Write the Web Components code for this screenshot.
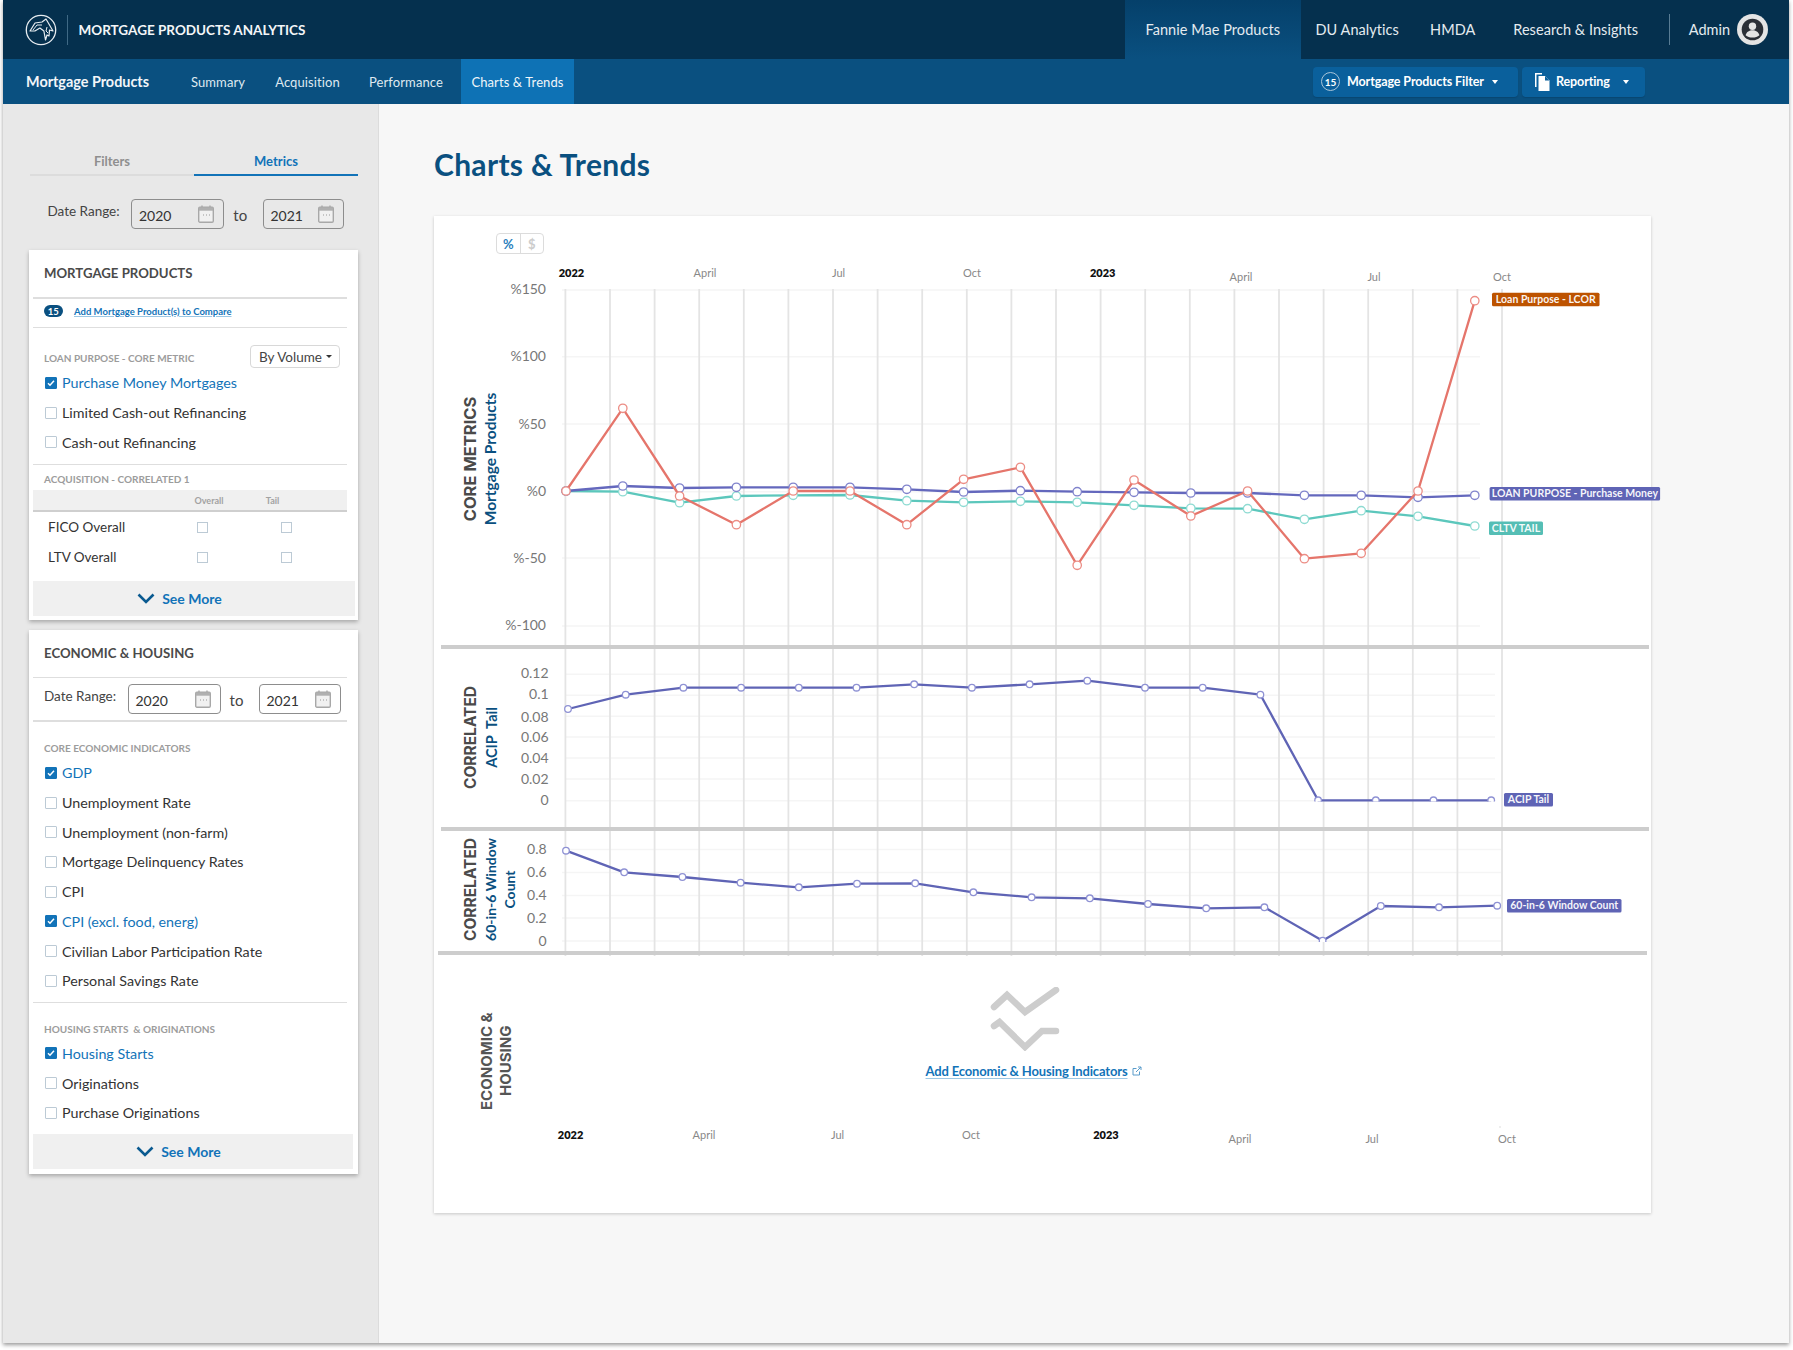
<!DOCTYPE html>
<html lang="en">
<head>
<meta charset="utf-8">
<title>Mortgage Products Analytics</title>
<style>
html,body{margin:0;padding:0;background:#fff;height:1350px;overflow:hidden}
body{font-family:"Lato","Noto Sans",sans-serif;color:#333;font-size:15px}
</style>
</head>
<body>
<app-shell></app-shell>
<script>
function def(name, css, html, init){
  customElements.define(name, class extends HTMLElement{
    constructor(){
      super();
      const r=this.attachShadow({mode:'open'});
      const h=typeof html==='function'?html(this):html;
      r.innerHTML='<style>'+css+'</style>'+h;
    }
    connectedCallback(){
      if(init&&!this._i){this._i=1;init(this,this.shadowRoot);}
    }
  });
}
const CAL='<svg width="16" height="18" viewBox="0 0 16 18"><path d="M4 0.5v3M12 0.5v3" stroke="#a8a8a8" stroke-width="1.4"/><rect x="0.7" y="2.2" width="14.6" height="15" rx="1.2" fill="#f1f1f1" stroke="#a8a8a8" stroke-width="1.4"/><rect x="1" y="2.5" width="14" height="3.2" fill="#b0b0b0"/><path d="M5 10h1M8 10h1M11 10h1" stroke="#999" stroke-width="1"/></svg>';

def('top-bar',`
:host{display:flex;height:59px;background:#05304e;color:#fff;align-items:stretch}
.logo{width:63.5px;box-sizing:border-box;padding-left:22px;display:flex;align-items:center}
.sep{width:1px;height:30px;background:#3f6985;align-self:center}
.name{margin-left:11px;font-weight:700;font-size:13.5px;align-self:center;color:#f4f6f8;white-space:nowrap}
nav{margin-left:auto;display:flex;align-items:stretch;font-size:14.5px;color:#e4ebf0}
nav span{display:flex;align-items:center;justify-content:center;letter-spacing:.05px}
.on{background:linear-gradient(#05406a,#0a5080)}
.div{width:1px;height:31px;background:#587c94;align-self:center;margin-left:9px}
.admin{font-size:14.5px;color:#e4ebf0;align-self:center;margin-left:19px}
.ava{align-self:center;margin-left:7px;margin-right:21px;display:block}
`,`
<div class="logo"><svg width="32" height="32" viewBox="0 0 32 32" fill="none" stroke="#e8edf1"><circle cx="16" cy="16" r="14.7" stroke-width="1.3"/><path d="M5 17l5-8 7-1 4-3 7 12-3.5-1-.5 6-2-1-1.5 5-1.6-9-4-3-5 3z" stroke-width="1.2" stroke-linejoin="round"/><path d="M8 16l4-5 5 0M22 13l-1 4 2 2" stroke-width="1"/></svg></div>
<div class="sep"></div>
<div class="name">MORTGAGE PRODUCTS ANALYTICS</div>
<nav>
<span class="on" style="width:176px">Fannie Mae Products</span>
<span style="width:113px">DU Analytics</span>
<span style="width:78px">HMDA</span>
<span style="width:168px">Research &amp; Insights</span>
</nav>
<div class="div"></div>
<div class="admin">Admin</div>
<svg class="ava" width="31" height="31" viewBox="0 0 31 31"><circle cx="15.5" cy="15.5" r="15.5" fill="#e4e4e4"/><circle cx="15.5" cy="15.5" r="10.8" fill="#2b2f36"/><circle cx="15.5" cy="12.3" r="3.7" fill="#e4e4e4"/><path d="M8.6 21.2c1-3.6 3.8-5 6.9-5s5.9 1.4 6.9 5c-1.8 1.5-4.200 2.400-6.900 2.400s-5.100-.9-6.900-2.400z" fill="#e4e4e4"/></svg>
`);

def('sub-bar',`
:host{display:flex;height:45px;background:#0a5080;color:#dfe9f0;font-size:13px;align-items:stretch}
b{width:173px;padding-left:23px;box-sizing:border-box;display:flex;align-items:center;color:#f2f6f9;font-size:14.4px;font-weight:700;white-space:nowrap}
span{display:flex;align-items:center;justify-content:center;letter-spacing:.1px}
.on{background:#0e72b5;color:#f0f6fa;margin-left:4px}
.r{margin-left:auto;display:flex;align-items:center;gap:4px;padding-right:144px}
.btn{height:30px;background:#0a609c;border-radius:4px;display:flex;align-items:center;color:#fff;font-size:12.5px;font-weight:700;box-shadow:0 1px 1px rgba(0,0,0,.12);box-sizing:border-box;justify-content:flex-start;letter-spacing:-.1px;white-space:nowrap}
.n{width:19px;height:19px;border:1.4px solid #a9c5d9;border-radius:50%;box-sizing:border-box;font-size:10px;display:flex;align-items:center;justify-content:center;margin:0 7px 0 8px}
.car{width:0;height:0;border:3.500px solid transparent;border-top:4px solid #fff;border-bottom:0;margin-left:auto}
`,`
<b>Mortgage Products</b>
<span style="width:84px">Summary</span>
<span style="width:95px">Acquisition</span>
<span style="width:102px">Performance</span>
<span class="on" style="width:113px">Charts &amp; Trends</span>
<div class="r">
<div class="btn" style="width:205px;padding-right:20px"><i class="n" style="font-style:normal">15</i>Mortgage Products Filter<i class="car"></i></div>
<div class="btn" style="width:123px;padding-right:16px;padding-left:12px"><svg width="17" height="18" viewBox="0 0 17 18" style="margin-right:5px" fill="#fff"><path d="M1 0h7v1.500H2.500V14H1z"/><path d="M4.500 3H11l4.500 4.500V18H4.500z"/><path d="M11 3v4.500h4.500" fill="#0a609c"/></svg>Reporting<i class="car"></i></div>
</div>
`);

def('side-tabs',`
:host{display:flex;margin:44px 20px 0 1px;height:28px;font-size:13px;font-weight:700;color:#8f8f8f;text-align:center}
div{flex:1;border-bottom:2px solid #dcdcdc;line-height:27px}
.a{color:#1273b8;border-color:#1273b8}
`,`<div>Filters</div><div class="a">Metrics</div>`);

def('date-box',`
:host{display:inline-flex;align-items:center;height:30px;box-sizing:border-box;border:1px solid #8d8d8d;border-radius:4px;padding:0 9px 0 7px;font-size:14px;color:#333;justify-content:space-between;background:transparent}
span{position:relative;top:1px}
svg{display:block}
`,(e)=>`<span>${e.getAttribute('v')}</span>${CAL}`);

def('date-row',`
:host{display:flex;align-items:center;font-size:13.5px;color:#444}
.l{white-space:nowrap;position:relative;top:-3px}
.t{font-size:15px;text-align:center;position:relative;top:1px;padding-right:6px;box-sizing:border-box}
`,(e)=>{
  const c=(e.getAttribute('c')||'').split(',').map(Number);
  return `<div class="l" style="width:${c[0]}px">Date Range:</div><date-box v="2020" style="width:${c[1]}px"></date-box><div class="t" style="width:${c[2]}px">to</div><date-box v="2021" style="width:${c[3]}px"></date-box>`;
});

def('metric-card',`
:host{display:block;background:#fff;box-shadow:0 2px 4px rgba(0,0,0,.28);width:329px;box-sizing:border-box}
`,`<slot></slot>`);

def('card-title',`
:host{display:block;font-weight:700;font-size:13.2px;color:#4a4a4a;padding-left:15px;white-space:nowrap}
`,`<slot></slot>`);

def('rule-line',`
:host{display:block;margin:0 11px 0 4px;background:#dedede;height:1px}
`,``);

def('sec-label',`
:host{display:block;font-weight:700;font-size:10px;color:#9c9c9c;padding-left:15px;white-space:nowrap}
`,`<slot></slot>`);

def('check-row',`
:host{display:flex;align-items:center;height:29.7px;padding-left:16px;font-size:14.3px;color:#333;white-space:nowrap}
:host([checked]){color:#1273b8}
.b{width:12px;height:12px;box-sizing:border-box;border:1px solid #bccad5;border-radius:1px;margin-right:5px;display:block;flex:none;background:#fff}
:host([checked]) .b{background:#1273b8;border-color:#1273b8}
svg{display:block}
`,(e)=>e.hasAttribute('checked')
 ?`<span class="b"><svg width="10" height="10" viewBox="0 0 10 10"><path d="M2 5.200l2 2 4-4.400" fill="none" stroke="#fff" stroke-width="1.500"/></svg></span><slot></slot>`
 :`<span class="b"></span><slot></slot>`);

def('see-more',`
:host{display:flex;align-items:center;justify-content:center;height:35px;background:#f0f0f0;font-weight:700;font-size:14px;color:#1273b8;gap:7px;padding-right:29px;box-sizing:border-box}
svg{display:block}
`,`<svg width="18" height="11" viewBox="0 0 18 11"><path d="M1.500 1.500L9 9l7.500-7.500" fill="none" stroke="#0a5a90" stroke-width="2.600"/></svg><span>See More</span>`);

def('product-card',`
:host{display:flex;flex-direction:column;padding-bottom:4px}
.t{height:47px;box-sizing:border-box;padding-bottom:2px;display:flex;align-items:center}
.cmp{height:28px;display:flex;align-items:center;padding:0 0 4px 14.5px;box-sizing:border-box;font-size:9.500px;font-weight:700;color:#1273b8}
.cmp i{font-style:normal;width:19.500px;height:12px;border-radius:6px;background:#0a5080;color:#fff;font-size:9.500px;display:flex;align-items:center;justify-content:center;margin-right:11px}
.cmp u{text-decoration-color:#9cc7e4}
.h{height:40px;display:flex;align-items:flex-end;justify-content:space-between;padding-right:18px}
.h sec-label{padding-bottom:4px}
.dd{width:90px;height:23px;box-sizing:border-box;border:1px solid #d8d8d8;border-radius:4px;font-size:13.500px;display:flex;align-items:center;padding-left:8px;color:#444}
.dd i{margin-left:auto;margin-right:7px;width:0;height:0;border:3px solid transparent;border-top:3.500px solid #333;border-bottom:0}
.acq{height:25px;display:flex;align-items:center;padding-top:2px;box-sizing:border-box}
.th{margin:0 11px 0 4px;height:22px;box-sizing:border-box;background:#f0f0f0;border-bottom:2px solid #cfcfcf;display:grid;grid-template-columns:151px 50px 77px 36px;font-size:9px;font-weight:700;color:#a2a2a2;align-items:center;text-align:center}
.tr{margin-left:19px;display:grid;grid-template-columns:149px 84px 30px;height:30px;align-items:center;font-size:13.500px;color:#333}
.c{width:11px;height:11px;box-sizing:border-box;border:1px solid #bccad5;display:block;background:#fff}
see-more{margin:9px 3px 0 4px}
`,`
<div class="t"><card-title>MORTGAGE PRODUCTS</card-title></div>
<rule-line style="height:2px"></rule-line>
<div class="cmp"><i>15</i><u>Add Mortgage Product(s) to Compare</u></div>
<rule-line></rule-line>
<div class="h"><sec-label>LOAN PURPOSE - CORE METRIC</sec-label><div class="dd">By Volume<i></i></div></div>
<check-row checked>Purchase Money Mortgages</check-row>
<check-row>Limited Cash-out Refinancing</check-row>
<check-row>Cash-out Refinancing</check-row>
<rule-line style="margin-top:7px"></rule-line>
<div class="acq"><sec-label>ACQUISITION - CORRELATED 1</sec-label></div>
<div class="th"><span></span><span>Overall</span><span>Tail</span><span></span></div>
<div class="tr"><span>FICO Overall</span><i class="c"></i><i class="c"></i></div>
<div class="tr"><span>LTV Overall</span><i class="c"></i><i class="c"></i></div>
<see-more></see-more>
`);

def('econ-card',`
:host{display:flex;flex-direction:column;padding-bottom:5px}
.t{height:47px;box-sizing:border-box;padding-bottom:2px;display:flex;align-items:center}
.d{height:42px;display:flex;align-items:center;padding:0 0 0 15px;box-sizing:border-box}
.s1{height:36px;display:flex;align-items:flex-end}
.s1 sec-label{padding-bottom:4px}
see-more{margin:6px 5px 0 4px}
`,`
<div class="t"><card-title>ECONOMIC &amp; HOUSING</card-title></div>
<rule-line></rule-line>
<div class="d"><date-row c="83.500,93,38,82"></date-row></div>
<rule-line style="height:2px"></rule-line>
<div class="s1"><sec-label>CORE ECONOMIC INDICATORS</sec-label></div>
<check-row checked>GDP</check-row>
<check-row>Unemployment Rate</check-row>
<check-row>Unemployment (non-farm)</check-row>
<check-row>Mortgage Delinquency Rates</check-row>
<check-row>CPI</check-row>
<check-row checked>CPI (excl. food, energ)</check-row>
<check-row>Civilian Labor Participation Rate</check-row>
<check-row>Personal Savings Rate</check-row>
<rule-line style="margin-top:6px"></rule-line>
<div class="s1"><sec-label style="padding-bottom:4px">HOUSING STARTS &nbsp;&amp; ORIGINATIONS</sec-label></div>
<check-row checked>Housing Starts</check-row>
<check-row>Originations</check-row>
<check-row>Purchase Originations</check-row>
<see-more></see-more>
`);

def('side-panel',`
:host{display:block;width:376px;background:#e8e8e8;border-right:1px solid #dcdcdc;box-sizing:border-box;padding-left:26px;flex:none}
date-row{margin:23px 0 21px 18.500px}
metric-card+metric-card{margin-top:10px}
`,`
<side-tabs></side-tabs>
<date-row c="83.500,93,38.500,81.500"></date-row>
<metric-card><product-card></product-card></metric-card>
<metric-card><econ-card></econ-card></metric-card>
`);

/* chart panels: drawn in page coordinates through the viewBox */
const X0=434;
const F='"Lato","Noto Sans",sans-serif';
const TITLE='"Inter","Lato",sans-serif';
function vGrid(y1,y2){let s='';for(let i=0;i<22;i++){const x=565.4+i*44.6;s+=`<line x1="${x}" x2="${x}" y1="${y1}" y2="${y2}" stroke="#e4e4e4" stroke-width="1.800"/>`;}return s;}
function hGrid(ys,x1,x2){return ys.map(y=>`<line x1="${x1}" x2="${x2}" y1="${y}" y2="${y}" stroke="#f5f5f5" stroke-width="1.500"/>`).join('');}
function yLabels(l,x){return l.map(([t,y])=>`<text x="${x}" y="${y+5}" text-anchor="end" font-size="14" fill="#777">${t}</text>`).join('');}
function series(xs,ys,col,ring,r,clip){
  const p=ys.map((y,i)=>xs[i]+','+y).join(' ');
  return `<polyline points="${p}" fill="none" stroke="${col}" stroke-width="2.300" stroke-linejoin="round"/>`+
   `<g ${clip?`clip-path="url(#${clip})"`:''}>`+ys.map((y,i)=>`<circle cx="${xs[i]}" cy="${y}" r="${r}" fill="#fff" stroke="${ring}" stroke-width="1.300"/>`).join('')+`</g>`;
}
function tag(t,x,y,w,col,size){return `<rect x="${x}" y="${y}" width="${w}" height="13.500" rx="1.500" fill="${col}"/><text x="${x+w/2}" y="${y+10.300}" text-anchor="middle" font-size="${size||10.500}" font-weight="700" fill="#fff" fill-opacity=".95">${t}</text>`;}
function rot(t,x,y,size,col,font){return `<text transform="rotate(-90 ${x} ${y})" x="${x}" y="${y}" text-anchor="middle" font-size="${size}" font-weight="700" fill="${col}" font-family='${font||F}' dominant-baseline="central">${t}</text>`;}
function sep(y,x1,x2){return `<rect x="${x1}" y="${y}" width="${x2-x1}" height="4" fill="#cdcdcd"/>`;}
const rng=(n,a,d)=>Array.from({length:n},(_,i)=>+(a+i*d).toFixed(1));

const PANELS={
 core:{y0:289,h:360,draw(){
  const xs=rng(17,566,56.8);
  const red=[491,408.3,496,524.7,491,491,524.7,479.3,467.3,565.3,480,516,491,558.7,553.3,491,300.7];
  const blue=[491,486,488,487.3,487.3,487.3,489.3,492,490.7,491.7,492.3,493,493,495.3,495.3,497.3,495.3];
  const teal=[491,491.7,502.7,496,495.3,495,500.7,502.3,501.3,502.3,505.3,508.3,508.7,519.3,510.7,516.3,526];
  return hGrid([290,356.700,424,491.700,558,626],562,1480)+vGrid(289,649)+sep(645,441,1649)
   +yLabels([['%150',289],['%100',356],['%50',424],['%0',491],['%-50',558],['%-100',625]],546)
   +rot('CORE METRICS',470,459,16.500,'#4a4a4a',TITLE)+rot('Mortgage Products',489.500,459,15.500,'#0a5080')
   +series(xs,teal,'#5cc7bc','#8edbd2',4.200)+series(xs,blue,'#6468bd','#8083cc',4.200)+series(xs,red,'#e5756b','#ec8d85',4.200)
   +tag('Loan Purpose - LCOR',1492,292.700,107.500,'#bd5300')+tag('LOAN PURPOSE - Purchase Money',1489.600,487,170.500,'#5f64b5')+tag('CLTV TAIL',1489,521.500,54,'#55beb5');
 }},
 acip:{y0:649,h:182,draw(){
  const xs=rng(17,568,57.7);
  const ys=[709,694.7,687.7,687.7,687.7,687.7,684.3,687.7,684.3,680.7,687.7,687.7,694.7,800.3,800.3,800.3,800.3];
  return hGrid([674.300,695.300,716.300,737,758,779,800.700],565,1495)+vGrid(649,831)+sep(827,441,1649)
   +yLabels([['0.12',673],['0.1',694.300],['0.08',716.700],['0.06',737.300],['0.04',758.300],['0.02',779.300],['0',800]],548.600)
   +rot('CORRELATED',470.700,737.500,15.500,'#4a4a4a',TITLE)+rot('ACIP&#160;&#160;Tail',491,737.500,14.500,'#0a5080')
   +`<clipPath id="c2"><rect x="440" y="650" width="1200" height="151.500"/></clipPath>`
   +series(xs,ys,'#5f64b5','#8f92d4',3.300,'c2')+tag('ACIP Tail',1504,793,49,'#5f64b5');
 }},
 win:{y0:831,h:125,draw(){
  const xs=rng(17,566,58.2);
  const ys=[850.7,872.3,877,882.7,887.3,883.7,883.3,892.3,897.3,898.3,904,908.3,907.3,940.7,906,907.3,905.7];
  return hGrid([849.500,872.500,895.500,918,941],562,1501)+vGrid(831,956)+sep(951,438,1647)
   +yLabels([['0.8',849],['0.6',872],['0.4',895],['0.2',917.700],['0',941]],546.600)
   +rot('CORRELATED',470.700,889.500,15.500,'#4a4a4a',TITLE)+rot('60-in-6 Window',490,889.500,14,'#0a5080')+rot('Count',509,889.500,14,'#0a5080')
   +`<clipPath id="c3"><rect x="440" y="832" width="1200" height="110"/></clipPath>`
   +series(xs,ys,'#5f64b5','#8f92d4',3.300,'c3')+tag('60-in-6 Window Count',1507,899,114.500,'#5f64b5');
 }},
 axisTop:{y0:254,h:35,draw(){
  const l=(t,x,y,b)=>`<text x="${x}" y="${y}" text-anchor="middle" font-size="11" font-weight="${b?800:400}" fill="${b?'#111':'#888'}">${t}</text>`;
  return l('2022',571.500,277,1)+l('April',705,277)+l('Jul',838.600,277)+l('Oct',972,277)+l('2023',1102.700,277,1)+l('April',1241,281)+l('Jul',1374,281)+l('Oct',1502,281);
 }},
 axisBottom:{y0:1120,h:30,draw(){
  const l=(t,x,y,b)=>`<text x="${x}" y="${y}" text-anchor="middle" font-size="11" font-weight="${b?800:400}" fill="${b?'#111':'#888'}">${t}</text>`;
  return `<line x1="1500" x2="1500" y1="1126" y2="1128" stroke="#ddd"/>`+l('2022',570.600,1139,1)+l('April',704,1139)+l('Jul',837.600,1139)+l('Oct',971,1139)+l('2023',1106,1139,1)+l('April',1240,1143)+l('Jul',1372,1143)+l('Oct',1507,1143);
 }}
};
def('chart-panel',`
:host{display:block;width:1217px}
svg{display:block;overflow:visible;font-family:${F}}
`,(e)=>{
  const p=PANELS[e.getAttribute('name')];
  return `<svg width="1217" height="${p.h}" viewBox="${X0} ${p.y0} 1217 ${p.h}">${p.draw()}</svg>`;
});

def('unit-toggle',`
:host{display:flex;width:48px;height:21px;box-sizing:border-box;border:1px solid #dcdcdc;border-radius:4px;margin-left:62px;font-size:13px;font-weight:700}
span{flex:1;display:flex;align-items:center;justify-content:center;color:#ccc}
span.a{color:#2a80bd;border-right:1px solid #dcdcdc}
`,`<span class="a">%</span><span>$</span>`);

def('empty-panel',`
:host{display:flex;height:164px;width:1217px;box-sizing:border-box;align-items:flex-start}
.t{width:100px;box-sizing:border-box;padding:55px 0 0 43px}
.t div{writing-mode:vertical-rl;transform:rotate(180deg);font-family:${TITLE};font-weight:700;font-size:15px;line-height:19px;color:#555;text-align:center;height:100px;white-space:nowrap}
.c{flex:1;padding-right:117px;display:flex;flex-direction:column;align-items:center}
.i{margin:31px 18px 0 0;display:block}
.l{margin-top:12px;font-size:13px;font-weight:700;letter-spacing:-.15px;color:#1273b8;display:flex;align-items:center;white-space:nowrap}
.l u{text-decoration-color:#9cc7e4;text-underline-offset:2px}
.l svg{margin-left:5px;display:block}
`,`
<div class="t"><div>ECONOMIC &amp;<br>HOUSING</div></div>
<div class="c">
<svg class="i" width="70" height="64" viewBox="0 0 70 64" fill="none" stroke="#cdcdcd" stroke-width="6.500" stroke-linecap="round" stroke-linejoin="miter"><path d="M4 20L17 8 35 25 66 3"/><path d="M4 39l5.500-4L35 60 52 44h14"/></svg>
<div class="l"><u>Add Economic &amp; Housing Indicators</u><svg width="10" height="10" viewBox="0 0 10 10" fill="none" stroke="#5a9ccb" stroke-width="1"><path d="M7.500 5.500v3.500H1V2.500h3.500M4 6l5-5M6 1h3v3"/></svg></div>
</div>
`);

def('chart-card',`
:host{display:block;width:1217px;height:997px;background:#fff;box-shadow:0 1px 3px rgba(0,0,0,.2);box-sizing:border-box;padding-top:17px;position:relative}
`,`
<unit-toggle></unit-toggle>
<chart-panel name="axisTop"></chart-panel>
<chart-panel name="core"></chart-panel>
<chart-panel name="acip"></chart-panel>
<chart-panel name="win"></chart-panel>
<empty-panel></empty-panel>
<chart-panel name="axisBottom"></chart-panel>
`);

def('main-view',`
:host{display:block;flex:1;background:#f7f7f7;padding-left:55px;box-sizing:border-box}
h1{margin:0 0 33px;padding-top:41px;font-size:30px;line-height:38px;color:#0a5080;font-weight:700;height:38px;letter-spacing:.3px;white-space:nowrap}
`,`<h1>Charts &amp; Trends</h1><chart-card></chart-card>`);

def('app-shell',`
:host{display:flex;flex-direction:column;width:1786px;height:1343px;margin-left:3px;box-shadow:0 2px 4px rgba(0,0,0,.4);overflow:hidden;background:#f7f7f7}
.b{display:flex;flex:1;min-height:0}
`,`<top-bar></top-bar><sub-bar></sub-bar><div class="b"><side-panel></side-panel><main-view></main-view></div>`);
</script>
</body>
</html>
